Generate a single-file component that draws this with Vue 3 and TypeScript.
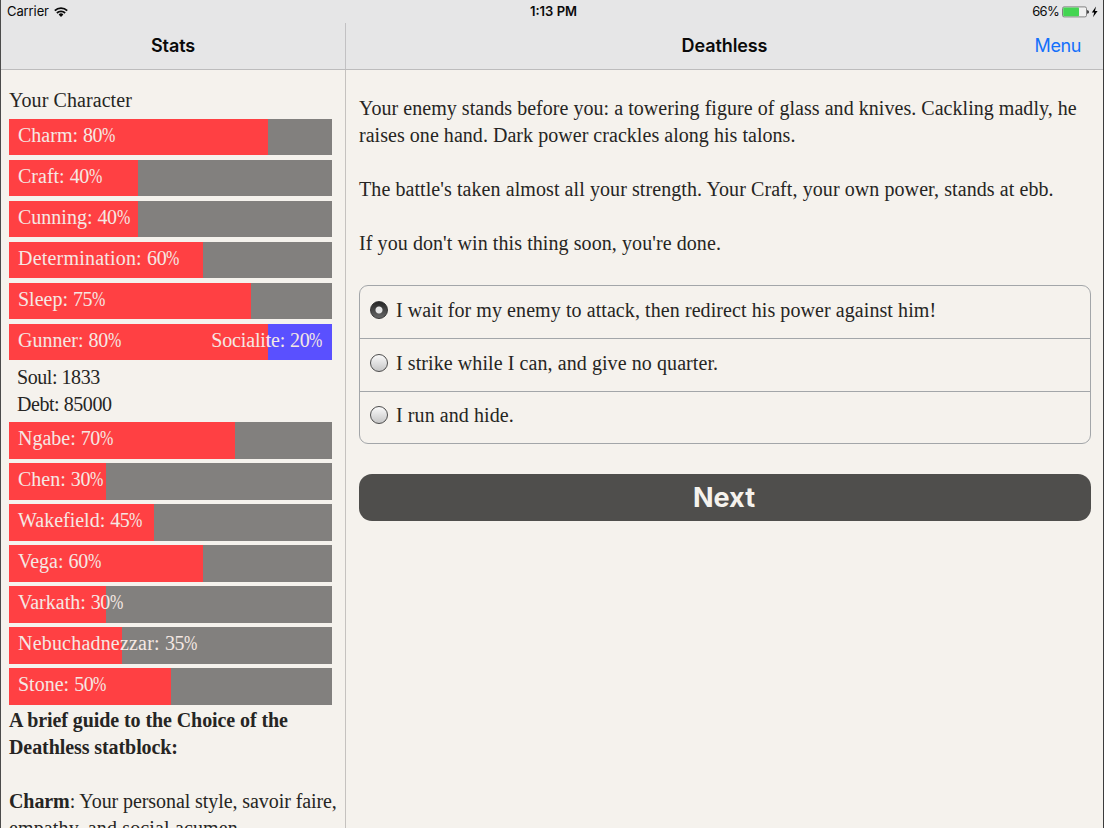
<template>
  <div class="screen">
    <header class="top">
      <div class="status-bar">
        <div class="status-left">
          <span>Carrier</span>
          <svg class="wifi" viewBox="0 0 14 10" width="14" height="10">
            <path d="M0.8 3.7 A8.9 8.9 0 0 1 13.2 3.7" />
            <path d="M2.9 6 A5.8 5.8 0 0 1 11.1 6" />
            <path class="wifi-dot" d="M7 10 L4.6 7.6 A3.3 3.3 0 0 1 9.4 7.6 Z" />
          </svg>
        </div>
        <div class="clock">1:13 PM</div>
        <div class="status-right">
          <span class="percent">66%</span>
          <svg viewBox="0 0 36 12" width="36" height="12">
            <rect class="battery" x="0.5" y="0.9" width="24" height="10" rx="1.6" />
            <rect class="battery-level" x="1.2" y="1.6" width="15.8" height="8.6" rx="0.8" />
            <path d="M25.3 4 Q26.8 4.4 26.8 5.9 Q26.8 7.4 25.3 7.8 Z" />
            <path d="M34 0.6 L29.8 6.6 H32.2 L31 11.2 L35.6 5.1 H33 Z" />
          </svg>
        </div>
      </div>
      <div class="nav">
        <div class="nav-stats"><span class="title">Stats</span></div>
        <div class="nav-story">
          <span class="title title-story">Deathless</span>
          <button class="menu-btn">Menu</button>
        </div>
      </div>
    </header>

    <div class="body">
      <aside class="stats">
        <div class="stats-title">Your Character</div>
        <template v-for="stat in stats" :key="stat.name">
          <div v-if="stat.type === 'text'" class="stat-text">{{ stat.name }}: {{ stat.value }}</div>
          <div v-else class="stat-bar" :class="{ opposed: stat.opposite }">
            <div class="stat-fill" :style="{ width: stat.value + '%' }"></div>
            <div class="stat-label" :class="{ long: stat.name.length > 12 }">
              <span
                >{{ stat.name }}: <span class="num">{{ stat.value }}</span
                ><span class="pct">%</span></span
              >
              <span v-if="stat.opposite" class="opposite"
                >{{ stat.opposite }}: <span class="num">{{ 100 - stat.value }}</span
                ><span class="pct">%</span></span
              >
            </div>
          </div>
        </template>
        <div class="guide">
          <b>A brief guide to the Choice of the<br />Deathless statblock:</b>
          <p>
            <b>Charm</b>: Your personal style, savoir faire,<br /><span class="second-line"
              >empathy, and social acumen.</span
            >
          </p>
        </div>
      </aside>

      <main class="story">
        <p class="intro">
          Your enemy stands before you: a towering figure of glass and knives. Cackling madly, he<br />
          raises one hand. Dark power crackles along his talons.
        </p>
        <p>The battle's taken almost all your strength. Your Craft, your own power, stands at ebb.</p>
        <p>If you don't win this thing soon, you're done.</p>

        <div class="choices">
          <label v-for="(choice, index) in choices" :key="index" class="choice">
            <input v-model="selected" type="radio" name="choice" :value="index" />
            <span>{{ choice }}</span>
          </label>
        </div>
        <button class="next-btn">Next</button>
      </main>
    </div>
  </div>
</template>

<script setup lang="ts">
import { ref } from 'vue'

interface Stat {
  name: string
  value: number
  type?: 'text'
  opposite?: string
}

const stats: Stat[] = [
  { name: 'Charm', value: 80 },
  { name: 'Craft', value: 40 },
  { name: 'Cunning', value: 40 },
  { name: 'Determination', value: 60 },
  { name: 'Sleep', value: 75 },
  { name: 'Gunner', value: 80, opposite: 'Socialite' },
  { name: 'Soul', value: 1833, type: 'text' },
  { name: 'Debt', value: 85000, type: 'text' },
  { name: 'Ngabe', value: 70 },
  { name: 'Chen', value: 30 },
  { name: 'Wakefield', value: 45 },
  { name: 'Vega', value: 60 },
  { name: 'Varkath', value: 30 },
  { name: 'Nebuchadnezzar', value: 35 },
  { name: 'Stone', value: 50 },
]

const choices: string[] = [
  'I wait for my enemy to attack, then redirect his power against him!',
  'I strike while I can, and give no quarter.',
  'I run and hide.',
]

const selected = ref(0)
</script>

<style>
body {
  margin: 0;
  overflow: hidden;
}
</style>

<style scoped>
.screen {
  box-sizing: border-box;
  width: 1104px;
  height: 828px;
  display: flex;
  flex-direction: column;
  overflow: hidden;
  border-left: 1px solid #4b4b4b;
  border-right: 1px solid #3c3c3c;
  background: #f5f2ed;
  color: #262523;
  font-family: Palatino, 'Palatino Linotype', 'Liberation Serif', serif;
  font-size: 20px;
  line-height: 27px;
  letter-spacing: 0.08px;
}

.top {
  flex: none;
  box-sizing: border-box;
  height: 70px;
  border-bottom: 1px solid #bdbcbd;
  background: #e6e6e7;
  color: #0a0a0a;
  font-family: Inter, 'Liberation Sans', sans-serif;
  letter-spacing: 0;
}

.status-bar {
  display: grid;
  grid-template-columns: 1fr auto 1fr;
  align-items: center;
  height: 23px;
  padding: 0 5px 0 6px;
  font-size: 13px;
  line-height: 23px;
}

.status-left,
.status-right {
  display: flex;
  align-items: center;
}

.status-left {
  gap: 5px;
  letter-spacing: -0.1px;
}

.status-right {
  justify-content: flex-end;
  gap: 3px;
}

.percent {
  letter-spacing: -0.7px;
}

.wifi {
  fill: none;
  stroke: #0a0a0a;
  stroke-width: 1.8;
}

.wifi-dot {
  fill: #0a0a0a;
  stroke: none;
}

.battery {
  fill: #f0f0f0;
  stroke: #777;
  stroke-width: 0.9;
}

.battery-level {
  fill: #43d551;
}

.clock {
  padding-left: 2px;
  font-weight: 600;
}

.nav {
  display: flex;
  height: 46px;
}

.nav-stats {
  display: flex;
  align-items: center;
  justify-content: center;
  width: 344px;
  border-right: 1px solid #c2c1c3;
}

.nav-story {
  flex: 1;
  display: grid;
  grid-template-columns: 1fr auto 1fr;
  align-items: center;
}

.title {
  padding-bottom: 1px;
  font-size: 18px;
  font-weight: 600;
  letter-spacing: -0.1px;
}

.title-story {
  grid-column: 2;
}

.menu-btn {
  justify-self: end;
  margin-right: 22px;
  padding: 0 0 1px;
  border: none;
  background: none;
  color: #1470fb;
  font-family: inherit;
  font-size: 18px;
  letter-spacing: -0.4px;
  cursor: pointer;
}

.body {
  flex: 1;
  display: flex;
  min-height: 0;
}

.stats {
  flex: none;
  box-sizing: border-box;
  width: 345px;
  padding: 17px 0 0 8px;
  border-right: 1px solid #c5c2bf;
  overflow: hidden;
}

.stats-title {
  height: 31.7px;
}

.stat-bar {
  position: relative;
  width: 323.3px;
  height: 36.5px;
  margin-bottom: 4.5px;
  background: #82807e;
  color: #f5e8e3;
}

.stat-bar.opposed {
  margin-bottom: 3.6px;
  background: #5a50ff;
}

.stat-fill {
  height: 100%;
  background: #ff4043;
}

.stat-label {
  position: absolute;
  inset: 0;
  display: flex;
  justify-content: space-between;
  padding: 3px 10px 3px 9px;
  letter-spacing: 0;
}

.stat-label.long {
  letter-spacing: 0.2px;
}

.opposite {
  letter-spacing: -0.15px;
}

.num {
  letter-spacing: -0.4px;
}

.pct {
  display: inline-block;
  width: 13px;
  transform: scaleX(0.8);
  transform-origin: left;
}

.stat-text {
  padding-left: 8px;
  letter-spacing: -0.45px;
}

.stat-text + .stat-bar {
  margin-top: 4.7px;
}

.guide {
  margin-top: -2px;
  letter-spacing: -0.08px;
  white-space: nowrap;
}

.guide p {
  margin: 27px 0 0;
}

.second-line {
  letter-spacing: 0.14px;
}

.story {
  flex: 1;
  padding: 25px 12px 0 13px;
}

.story p {
  margin: 0 0 27px;
  white-space: nowrap;
}

.story .intro {
  letter-spacing: 0.04px;
}

.choices {
  box-sizing: border-box;
  margin-top: 28px;
  border: 1px solid #a3a6a9;
  border-radius: 9px;
}

.choice {
  box-sizing: border-box;
  display: flex;
  align-items: center;
  gap: 8px;
  height: 52.3px;
  padding: 0 10px 4px;
  cursor: pointer;
}

.choice + .choice {
  height: 52.6px;
  border-top: 1px solid #a3a6a9;
}

.choice input {
  appearance: none;
  box-sizing: border-box;
  width: 18px;
  height: 18px;
  margin: 0 0 1px;
  border: 1px solid #4c4c4c;
  border-radius: 50%;
  background: linear-gradient(#fafafa, #c6c6c6);
}

.choice input:checked {
  border-color: #333;
  background: radial-gradient(circle, #e4e4e4 3px, transparent 4px), linear-gradient(#252525, #686868);
}

.next-btn {
  display: block;
  width: 100%;
  height: 47px;
  margin-top: 29.5px;
  padding: 1px 2px 0 0;
  border: none;
  border-radius: 13px;
  background: #4f4e4c;
  color: #f5f2ed;
  font-family: Inter, 'Liberation Sans', sans-serif;
  font-size: 27px;
  font-weight: 700;
  cursor: pointer;
}
</style>
